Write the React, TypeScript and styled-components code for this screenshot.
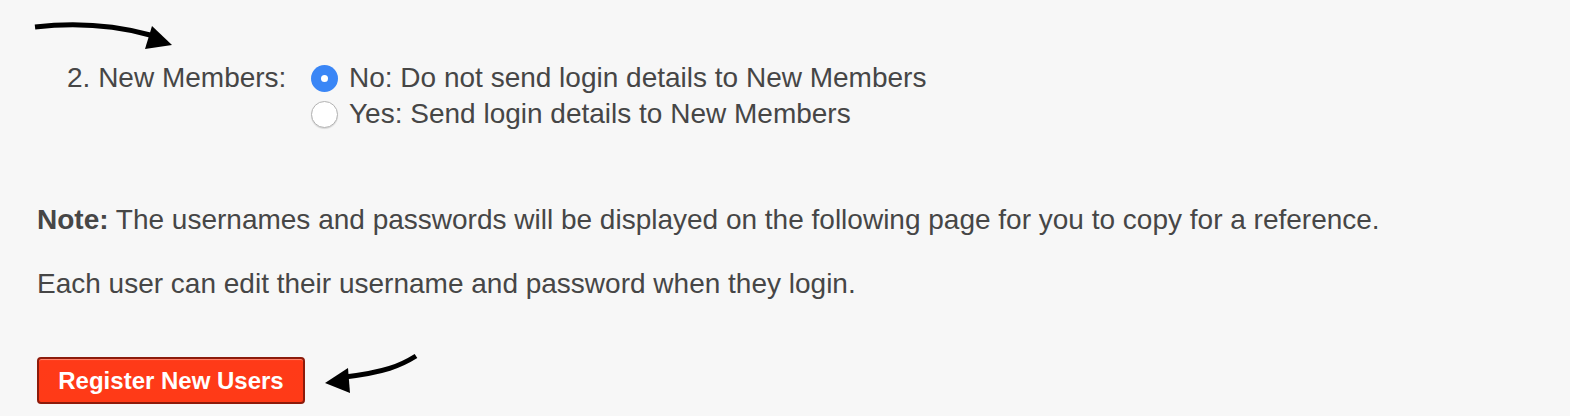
import React from "react";
import styled, { createGlobalStyle } from "styled-components";

const GlobalStyle = createGlobalStyle`
  html, body {
    margin: 0;
    padding: 0;
    background: #f7f7f7;
  }
  body {
    font-family: "Liberation Sans", Arial, Helvetica, sans-serif;
    color: #464646;
  }
`;

const Page = styled.div`
  position: relative;
  width: 1570px;
  height: 416px;
  box-sizing: border-box;
  padding: 60px 0 0 37px;
  background: #f7f7f7;
  font-size: 28px;
  line-height: 36px;
  color: #464646;
  overflow: hidden;
`;

const OptionRow = styled.div`
  display: flex;
  align-items: flex-start;
`;

const OptionLabel = styled.div`
  width: 244px;
  padding-left: 30px;
  flex: none;
  white-space: nowrap;
`;

const RadioGroup = styled.div`
  display: flex;
  flex-direction: column;
`;

const RadioOption = styled.label`
  display: flex;
  align-items: center;
  gap: 11px;
  height: 36px;
  white-space: nowrap;
`;

const RadioDot = styled.span<{ $checked?: boolean }>`
  box-sizing: border-box;
  width: 27px;
  height: 27px;
  border-radius: 50%;
  flex: none;
  position: relative;
  margin-top: 0;
  background: ${(p) => (p.$checked ? "#3a86f6" : "#ffffff")};
  border: ${(p) => (p.$checked ? "none" : "1px solid #b3b3b3")};
  box-shadow: ${(p) => (p.$checked ? "none" : "0 1px 1px rgba(0,0,0,0.12)")};
  &::after {
    content: "";
    display: ${(p) => (p.$checked ? "block" : "none")};
    position: absolute;
    left: 50%;
    top: 50%;
    width: 7px;
    height: 7px;
    margin: -3.5px 0 0 -3.5px;
    border-radius: 50%;
    background: #ffffff;
  }
`;

const Paragraph = styled.p<{ $top: number }>`
  margin: ${(p) => p.$top}px 0 0 0;
  white-space: nowrap;
`;

const Strong = styled.strong`
  font-weight: bold;
`;

const RegisterButton = styled.button`
  display: flex;
  align-items: center;
  justify-content: center;
  box-sizing: border-box;
  margin-top: 55px;
  width: 268px;
  height: 47px;
  padding: 0 19px;
  border: 2px solid #8d1b0b;
  border-radius: 4px;
  background: linear-gradient(#ff4424 0, #ff3a18 6%, #ff3a17 100%);
  box-shadow: inset 0 1px 0 rgba(255, 160, 140, 0.7);
  color: #ffffff;
  font-family: "Liberation Sans", Arial, Helvetica, sans-serif;
  font-size: 24px;
  font-weight: bold;
  line-height: 1;
  cursor: pointer;
`;

const Annotations = styled.svg`
  position: absolute;
  left: 0;
  top: 0;
  width: 1570px;
  height: 416px;
  pointer-events: none;
`;

export default function App() {
  return (
    <>
      <GlobalStyle />
      <Page>
        <OptionRow>
          <OptionLabel>2. New Members:</OptionLabel>
          <RadioGroup>
            <RadioOption>
              <RadioDot $checked />
              No: Do not send login details to New Members
            </RadioOption>
            <RadioOption>
              <RadioDot />
              Yes: Send login details to New Members
            </RadioOption>
          </RadioGroup>
        </OptionRow>
        <Paragraph $top={70}>
          <Strong>Note:</Strong> The usernames and passwords will be displayed on the
          following page for you to copy for a reference.
        </Paragraph>
        <Paragraph $top={28}>
          Each user can edit their username and password when they login.
        </Paragraph>
        <RegisterButton>Register New Users</RegisterButton>
        <Annotations viewBox="0 0 1570 416">
          <path
            d="M35 27 C 70 23, 110 24, 150 35"
            fill="none"
            stroke="#000"
            strokeWidth="5"
            strokeLinecap="butt"
          />
          <polygon points="152,26 172,45 145,49" fill="#000" />
          <path
            d="M416 356 C 400 366, 385 372, 345 377"
            fill="none"
            stroke="#000"
            strokeWidth="5"
            strokeLinecap="butt"
          />
          <polygon points="348,368 325,383 350,393" fill="#000" />
        </Annotations>
      </Page>
    </>
  );
}
